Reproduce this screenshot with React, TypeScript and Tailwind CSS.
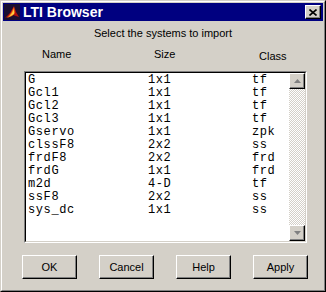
import React from 'react';

const rows = [
  ['G', '1x1', 'tf'],
  ['Gcl1', '1x1', 'tf'],
  ['Gcl2', '1x1', 'tf'],
  ['Gcl3', '1x1', 'tf'],
  ['Gservo', '1x1', 'zpk'],
  ['clssF8', '2x2', 'ss'],
  ['frdF8', '2x2', 'frd'],
  ['frdG', '1x1', 'frd'],
  ['m2d', '4-D', 'tf'],
  ['ssF8', '2x2', 'ss'],
  ['sys_dc', '1x1', 'ss'],
];

const raised = 'border-t border-l border-t-white border-l-white border-r border-b border-r-black border-b-black shadow-[inset_-1px_-1px_0_#808080] bg-[#d4d0c8]';

const ScrollBtn = ({ up }: { up?: boolean }) => (
  <div className={`w-[16px] h-[16px] flex items-center justify-center ${raised}`}>
    <svg width="7" height="4" viewBox="0 0 7 4">
      {up ? <polygon points="3.5,0 7,4 0,4" fill="#808080" /> : <polygon points="0,0 7,0 3.5,4" fill="#808080" />}
    </svg>
  </div>
);

const App: React.FC = () => {
  return (
    <div className="w-[326px] h-[292px] border border-t-[#d4d0c8] border-l-[#d4d0c8] border-r-black border-b-black font-['Liberation_Sans',Arial,sans-serif]">
      <div className="h-full border border-t-white border-l-white border-r-[#808080] border-b-[#808080] bg-[#d4d0c8] p-px flex flex-col">
        {/* title bar */}
        <div className="h-[18px] bg-[#000080] flex items-center pl-[1px] pr-[2px]">
          <svg width="16" height="16" viewBox="0 0 16 16">
            <rect width="16" height="16" fill="#1a1030" />
            <polygon points="1,14 6,9 10,2 12,8 15,13 9,11" fill="#b01010" />
            <polygon points="3,14 7,9 10,3 11,9 8,12" fill="#f07010" />
            <polygon points="5,13 8,9 10,5 10,10" fill="#ffd040" />
          </svg>
          <span className="ml-[3px] text-white font-bold text-[14px] leading-none">LTI Browser</span>
          <div className={`ml-auto w-[16px] h-[14px] flex items-center justify-center ${raised}`}>
            <svg width="8" height="7" viewBox="0 0 8 7">
              <path d="M0.5 0.5 L7.5 6.5 M7.5 0.5 L0.5 6.5" stroke="black" strokeWidth="1.6" />
            </svg>
          </div>
        </div>

        <div className="mt-[5px] text-center text-[11px] leading-[14px] text-black">Select the systems to import</div>

        <div className="mt-[7px] flex pl-[39px] text-[11px] leading-[14px] text-black">
          <span className="w-[112px]">Name</span>
          <span className="w-[105px]">Size</span>
          <span className="mt-[2px]">Class</span>
        </div>

        {/* list box */}
        <div className="mt-[8px] ml-[21px] w-[283px] h-[172px] border border-t-[#808080] border-l-[#808080] border-r-white border-b-white">
          <div className="h-full border border-t-black border-l-black border-r-[#d4d0c8] border-b-[#d4d0c8] bg-white flex">
            <div className="flex-1 pl-[2px] pt-px font-['Liberation_Mono','Courier_New',monospace] text-[12px] tracking-[0.6px] leading-[13px] text-black">
              {rows.map(([n, s, c]) => (
                <div key={n} className="flex h-[13px]">
                  <span className="w-[120px]">{n}</span>
                  <span className="w-[104px]">{s}</span>
                  <span>{c}</span>
                </div>
              ))}
            </div>
            <div className="w-[16px] flex flex-col">
              <ScrollBtn up />
              <div className="flex-1 bg-[repeating-conic-gradient(#d4d0c8_0_25%,#ffffff_0_50%)] bg-[length:2px_2px]" />
              <ScrollBtn />
            </div>
          </div>
        </div>

        {/* buttons */}
        <div className="mt-[12px] flex pl-[19px] gap-[22px] text-[11px] text-black">
          {['OK', 'Cancel', 'Help', 'Apply'].map((b) => (
            <button key={b} className={`w-[55px] h-[24px] flex items-center justify-center ${raised}`}>
              {b}
            </button>
          ))}
        </div>
      </div>
    </div>
  );
};

export default App;
